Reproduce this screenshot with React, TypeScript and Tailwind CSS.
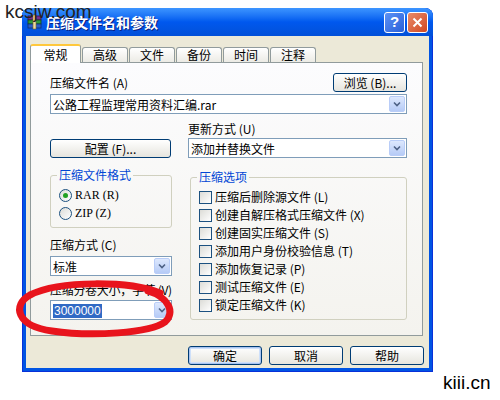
import React from "react";

const Combo: React.FC<{ value: string; className?: string; selected?: boolean }> = ({ value, className, selected }) => (
    <div className={`flex h-[20px] items-center border border-[#7f9db9] bg-white pl-[2px] pr-px ${className ?? ""}`}>
        <div className="flex-1 overflow-hidden whitespace-nowrap leading-[17px]">
            {selected ? (
                <span className="bg-[#316ac5] px-px font-['Liberation_Sans',sans-serif] text-[12px] text-white">{value}</span>
            ) : (
                value
            )}
        </div>
        <div className="flex h-[16px] w-[16px] shrink-0 items-center justify-center rounded-[2px] border border-[#b9cdf8] bg-gradient-to-b from-[#dde8fd] to-[#b6cbf6]">
            <svg width="8" height="6" viewBox="0 0 8 6">
                <path d="M1 1.5 L4 4.5 L7 1.5" fill="none" stroke="#4d6185" strokeWidth="1.6" />
            </svg>
        </div>
    </div>
);

const Button: React.FC<{ label: React.ReactNode; className?: string; isDefault?: boolean }> = ({ label, className, isDefault }) => (
    <div
        className={`flex h-[19px] items-center justify-center rounded-[3px] border border-[#003c74] bg-gradient-to-b from-white to-[#e6e5de] leading-none ${
            isDefault ? "shadow-[inset_0_0_0_1px_#a9c4f0,inset_0_0_0_2px_#cee0fa]" : ""
        } ${className ?? ""}`}
    >
        {label}
    </div>
);

const Check: React.FC<{ label: string }> = ({ label }) => (
    <div className="flex h-[18px] items-center">
        <div className="ml-[8px] h-[13px] w-[13px] border border-[#1c5180] bg-gradient-to-br from-[#dcdcd7] to-white" />
        <span className="ml-[3px] whitespace-nowrap">{label}</span>
    </div>
);

const Radio: React.FC<{ label: string; on?: boolean }> = ({ label, on }) => (
    <div className="flex h-[18px] items-center">
        <div className="ml-[8px] flex h-[13px] w-[13px] items-center justify-center rounded-full border border-[#1c5180] bg-gradient-to-br from-[#dcdcd7] to-white">
            {on && <div className="h-[5px] w-[5px] rounded-full bg-[#21a121]" />}
        </div>
        <span className="ml-[3px] font-['Liberation_Serif',serif] text-[12px]">{label}</span>
    </div>
);

const tabs = ["常规", "高级", "文件", "备份", "时间", "注释"];

const App: React.FC = () => {
    return (
        <div className="relative h-[400px] w-[500px] overflow-hidden bg-white font-['Noto_Sans_CJK_SC','Liberation_Sans',sans-serif] text-[12px] text-black">
            <div className="ml-[22px] mt-[8px] flex h-[364px] w-[411px] flex-col rounded-t-[8px] bg-[#0054e3] shadow-[inset_0_0_0_1px_#0831d9]">
                {/* title bar */}
                <div className="flex h-[28px] items-center rounded-t-[8px] bg-gradient-to-b from-[#3d95ff] via-[#0058ee] to-[#0250d8] pl-[5px] pr-[5px]">
                    <svg width="16" height="16" viewBox="0 0 16 16">
                        <rect x="1" y="2" width="13" height="4" fill="#7a2f8c" stroke="#3b1146" strokeWidth="0.8" />
                        <rect x="1" y="6" width="13" height="4" fill="#2d9b3b" stroke="#14451a" strokeWidth="0.8" />
                        <rect x="1" y="10" width="13" height="4" fill="#2b5fc4" stroke="#13306a" strokeWidth="0.8" />
                        <rect x="6" y="1" width="3" height="14" fill="#e9d8a0" stroke="#7a6526" strokeWidth="0.6" />
                    </svg>
                    <span className="ml-[3px] text-[14px] font-bold text-white [text-shadow:1px_1px_#0a1e80]">压缩文件名和参数</span>
                    <div className="ml-auto flex gap-[2px]">
                        <div className="flex h-[21px] w-[21px] items-center justify-center rounded-[3px] border border-white bg-gradient-to-br from-[#5c92f5] to-[#2a5fd8] font-['Liberation_Sans',sans-serif] text-[15px] font-bold text-white">
                            ?
                        </div>
                        <div className="flex h-[21px] w-[21px] items-center justify-center rounded-[3px] border border-white bg-gradient-to-br from-[#e88a68] to-[#d0461e]">
                            <svg width="11" height="11" viewBox="0 0 11 11">
                                <path d="M1.5 1.5 L9.5 9.5 M9.5 1.5 L1.5 9.5" stroke="white" strokeWidth="2" />
                            </svg>
                        </div>
                    </div>
                </div>

                {/* client */}
                <div className="mx-[4px] mb-[4px] flex flex-1 flex-col bg-[#ece9d8] pt-[7px]">
                    <div className="ml-[4px] flex h-[19px] items-end gap-[1px]">
                        {tabs.map((t, i) =>
                            i === 0 ? (
                                <div
                                    key={t}
                                    className="relative z-10 -mb-px flex h-[19px] w-[51px] items-center justify-center rounded-t-[3px] border border-b-0 border-t-[2px] border-[#919b9c] border-t-[#ffc83c] bg-white"
                                >
                                    {t}
                                </div>
                            ) : (
                                <div
                                    key={t}
                                    className="flex h-[15px] w-[46px] items-center justify-center rounded-t-[3px] border border-b-0 border-[#919b9c] bg-gradient-to-b from-white to-[#ecebe5]"
                                >
                                    {t}
                                </div>
                            )
                        )}
                    </div>

                    {/* tab page */}
                    <div className="ml-[4px] mr-[6px] h-[274px] border border-[#919b9c] bg-gradient-to-b from-[#fcfcfe] to-[#f4f3ee] pl-[19px] pr-[15px] pt-[10px]">
                        <div className="flex items-center justify-between">
                            <span className="leading-[14px]">压缩文件名 (A)</span>
                            <Button label="浏览 (B)..." className="w-[74px]" />
                        </div>
                        <Combo value="公路工程监理常用资料汇编.rar" className="mt-[2px]" />

                        <div className="mt-[8px] flex items-end gap-[17px]">
                            <Button label="配置 (F)..." className="w-[121px]" />
                            <div className="flex-1">
                                <div className="leading-[14px]">更新方式 (U)</div>
                                <Combo value="添加并替换文件" className="mt-[2px]" />
                            </div>
                        </div>

                        <div className="mt-[10px] flex gap-[18px]">
                            <div className="w-[122px]">
                                <fieldset className="rounded-[3px] border border-[#d0d0bf] pb-[5px]">
                                    <legend className="ml-[6px] px-[2px] leading-[14px] text-[#0046d5]">压缩文件格式</legend>
                                    <div className="mt-[4px]">
                                        <Radio label="RAR (R)" on />
                                        <Radio label="ZIP (Z)" />
                                    </div>
                                </fieldset>
                                <div className="mt-[10px] leading-[14px]">压缩方式 (C)</div>
                                <Combo value="标准" className="mt-[4px]" />
                                <div className="mt-[7px] whitespace-nowrap leading-[14px] tracking-[-0.3px]">压缩分卷大小，字节 (V)</div>
                                <Combo value="3000000" className="mt-[3px]" selected />
                            </div>
                            <fieldset className="mt-[2px] h-[150px] flex-1 rounded-[3px] border border-[#d0d0bf]">
                                <legend className="ml-[6px] px-[2px] leading-[14px] text-[#0046d5]">压缩选项</legend>
                                <div className="mt-[4px]">
                                    <Check label="压缩后删除源文件 (L)" />
                                    <Check label="创建自解压格式压缩文件 (X)" />
                                    <Check label="创建固实压缩文件 (S)" />
                                    <Check label="添加用户身份校验信息 (T)" />
                                    <Check label="添加恢复记录 (P)" />
                                    <Check label="测试压缩文件 (E)" />
                                    <Check label="锁定压缩文件 (K)" />
                                </div>
                            </fieldset>
                        </div>
                    </div>

                    <div className="mr-[5px] mt-[10px] flex justify-end gap-[7px]">
                        <Button label="确定" className="w-[74px]" isDefault />
                        <Button label="取消" className="w-[74px]" />
                        <Button label="帮助" className="w-[74px]" />
                    </div>
                </div>
            </div>

            {/* red marker circle */}
            <svg className="pointer-events-none absolute left-0 top-0" width="500" height="400">
                <path
                    d="M160 293 C130 281, 60 280, 30 295 C12 305, 16 326, 52 331 C92 337, 150 333, 165 322 C176 312, 168 297, 148 291"
                    fill="none"
                    stroke="#e8141c"
                    strokeWidth="7"
                    strokeLinecap="round"
                />
            </svg>

            <span className="absolute left-[5px] top-[1px] font-['Liberation_Sans',sans-serif] text-[19px] leading-[22px] text-[#222]">kcsjw.com</span>
            <span className="absolute left-[443px] top-[372px] font-['Liberation_Sans',sans-serif] text-[19px] leading-[22px] text-black">kiii.cn</span>
        </div>
    );
};

export default App;
